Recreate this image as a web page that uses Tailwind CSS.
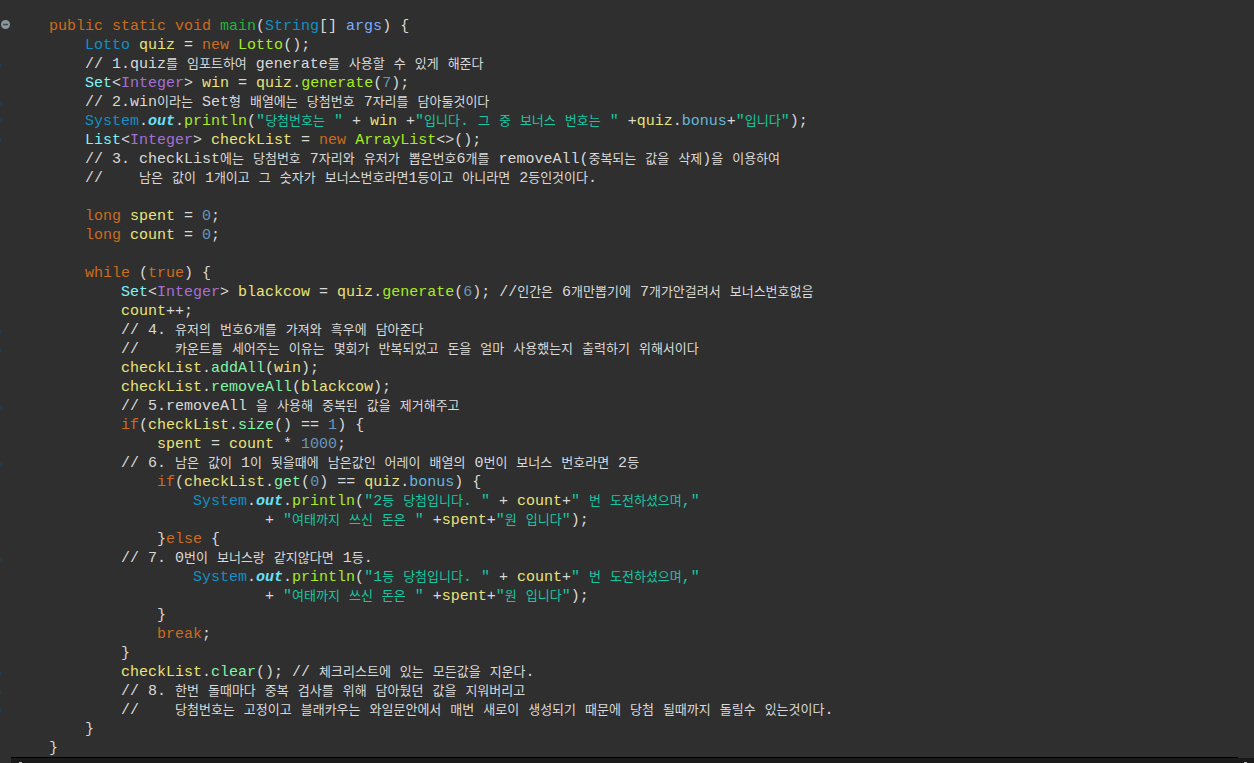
<!DOCTYPE html>
<html lang="ko">
<head>
    <meta charset="UTF-8">
    <title>Lotto.java</title>
    <script src="https://cdn.jsdelivr.net/npm/@tailwindcss/browser@4"></script>
</head>
<body class="bg-[#2f2f2f] h-[763px] overflow-hidden flex flex-col">
    <!-- Editor -->
    <div class="flex h-[757px] overflow-hidden">
        <!-- Gutter: fold icon and ruler marks -->
        <svg width="49" height="757" viewBox="0 0 49 757" class="block shrink-0">
            <circle cx="5.5" cy="24.5" r="4.5" fill="#8a979e"/>
            <rect x="3" y="23.75" width="5" height="1.5" fill="#3f4b52"/>
            <g fill="#1d3d50">
                <rect y="64" width="1.5" height="3"/>
                <rect y="102" width="1.5" height="3"/>
                <rect y="119" width="1.5" height="3"/>
                <rect y="138" width="1.5" height="4"/>
                <rect y="330" width="1.5" height="3"/>
                <rect y="349" width="1.5" height="3"/>
                <rect y="406" width="1.5" height="3"/>
                <rect y="463" width="1.5" height="3"/>
                <rect y="558" width="1.5" height="3"/>
                <rect y="672" width="1.5" height="3"/>
                <rect y="691" width="1.5" height="3"/>
                <rect y="708" width="1.5" height="4"/>
            </g>
        </svg>
        <pre class="pt-[17px] text-[15px] leading-[19px] text-[#d9d9d9] [font-family:'Liberation_Mono','Noto_Sans_CJK_KR',monospace] [&_.ko]:text-[13px]"><span class="text-[#cc6c1d]">public static void</span> <span class="text-[#1eb540]">main</span>(<span class="text-[#1290c3]">String</span>[] <span class="text-[#79abff]">args</span>) {
    <span class="text-[#1290c3]">Lotto</span> <span class="text-[#e9e37a]">quiz</span> = <span class="text-[#cc6c1d]">new</span> <span class="text-[#a7ec21]">Lotto</span>();
    // 1.quiz<span class="ko">를</span> <span class="ko">임포트하여</span> generate<span class="ko">를</span> <span class="ko">사용할</span> <span class="ko">수</span> <span class="ko">있게</span> <span class="ko">해준다</span>
    <span class="text-[#80f2f6]">Set</span>&lt;<span class="text-[#a66fd6]">Integer</span>&gt; <span class="text-[#e9e37a]">win</span> = <span class="text-[#e9e37a]">quiz</span>.<span class="text-[#a7ec21]">generate</span>(<span class="text-[#6897bb]">7</span>);
    // 2.win<span class="ko">이라는</span> Set<span class="ko">형</span> <span class="ko">배열에는</span> <span class="ko">당첨번호</span> 7<span class="ko">자리를</span> <span class="ko">담아둘것이다</span>
    <span class="text-[#1290c3]">System</span>.<span class="text-[#66e1f8] italic font-bold">out</span>.<span class="text-[#a7ec21]">println</span>(<span class="text-[#17c6a3]">"<span class="ko">당첨번호는</span> "</span> + <span class="text-[#e9e37a]">win</span> +<span class="text-[#17c6a3]">"<span class="ko">입니다</span>. <span class="ko">그</span> <span class="ko">중</span> <span class="ko">보너스</span> <span class="ko">번호는</span> "</span> +<span class="text-[#e9e37a]">quiz</span>.<span class="text-[#66b7dc]">bonus</span>+<span class="text-[#17c6a3]">"<span class="ko">입니다</span>"</span>);
    <span class="text-[#80f2f6]">List</span>&lt;<span class="text-[#a66fd6]">Integer</span>&gt; <span class="text-[#e9e37a]">checkList</span> = <span class="text-[#cc6c1d]">new</span> <span class="text-[#a7ec21]">ArrayList</span>&lt;&gt;();
    // 3. checkList<span class="ko">에는</span> <span class="ko">당첨번호</span> 7<span class="ko">자리와</span> <span class="ko">유저가</span> <span class="ko">뽑은번호</span>6<span class="ko">개를</span> removeAll(<span class="ko">중복되는</span> <span class="ko">값을</span> <span class="ko">삭제</span>)<span class="ko">을</span> <span class="ko">이용하여</span>
    //    <span class="ko">남은</span> <span class="ko">값이</span> 1<span class="ko">개이고</span> <span class="ko">그</span> <span class="ko">숫자가</span> <span class="ko">보너스번호라면</span>1<span class="ko">등이고</span> <span class="ko">아니라면</span> 2<span class="ko">등인것이다</span>.

    <span class="text-[#cc6c1d]">long</span> <span class="text-[#e9e37a]">spent</span> = <span class="text-[#6897bb]">0</span>;
    <span class="text-[#cc6c1d]">long</span> <span class="text-[#e9e37a]">count</span> = <span class="text-[#6897bb]">0</span>;

    <span class="text-[#cc6c1d]">while</span> (<span class="text-[#cc6c1d]">true</span>) {
        <span class="text-[#80f2f6]">Set</span>&lt;<span class="text-[#a66fd6]">Integer</span>&gt; <span class="text-[#e9e37a]">blackcow</span> = <span class="text-[#e9e37a]">quiz</span>.<span class="text-[#a7ec21]">generate</span>(<span class="text-[#6897bb]">6</span>); //<span class="ko">인간은</span> 6<span class="ko">개만뽑기에</span> 7<span class="ko">개가안걸려서</span> <span class="ko">보너스번호없음</span>
        <span class="text-[#e9e37a]">count</span>++;
        // 4. <span class="ko">유저의</span> <span class="ko">번호</span>6<span class="ko">개를</span> <span class="ko">가져와</span> <span class="ko">흑우에</span> <span class="ko">담아준다</span>
        //    <span class="ko">카운트를</span> <span class="ko">세어주는</span> <span class="ko">이유는</span> <span class="ko">몇회가</span> <span class="ko">반복되었고</span> <span class="ko">돈을</span> <span class="ko">얼마</span> <span class="ko">사용했는지</span> <span class="ko">출력하기</span> <span class="ko">위해서이다</span>
        <span class="text-[#e9e37a]">checkList</span>.<span class="text-[#80f6a7]">addAll</span>(<span class="text-[#e9e37a]">win</span>);
        <span class="text-[#e9e37a]">checkList</span>.<span class="text-[#80f6a7]">removeAll</span>(<span class="text-[#e9e37a]">blackcow</span>);
        // 5.removeAll <span class="ko">을</span> <span class="ko">사용해</span> <span class="ko">중복된</span> <span class="ko">값을</span> <span class="ko">제거해주고</span>
        <span class="text-[#cc6c1d]">if</span>(<span class="text-[#e9e37a]">checkList</span>.<span class="text-[#80f6a7]">size</span>() == <span class="text-[#6897bb]">1</span>) {
            <span class="text-[#e9e37a]">spent</span> = <span class="text-[#e9e37a]">count</span> * <span class="text-[#6897bb]">1000</span>;
        // 6. <span class="ko">남은</span> <span class="ko">값이</span> 1<span class="ko">이</span> <span class="ko">됫을때에</span> <span class="ko">남은값인</span> <span class="ko">어레이</span> <span class="ko">배열의</span> 0<span class="ko">번이</span> <span class="ko">보너스</span> <span class="ko">번호라면</span> 2<span class="ko">등</span>
            <span class="text-[#cc6c1d]">if</span>(<span class="text-[#e9e37a]">checkList</span>.<span class="text-[#80f6a7]">get</span>(<span class="text-[#6897bb]">0</span>) == <span class="text-[#e9e37a]">quiz</span>.<span class="text-[#66b7dc]">bonus</span>) {
                <span class="text-[#1290c3]">System</span>.<span class="text-[#66e1f8] italic font-bold">out</span>.<span class="text-[#a7ec21]">println</span>(<span class="text-[#17c6a3]">"2<span class="ko">등</span> <span class="ko">당첨입니다</span>. "</span> + <span class="text-[#e9e37a]">count</span>+<span class="text-[#17c6a3]">" <span class="ko">번</span> <span class="ko">도전하셨으며</span>,"</span>
                        + <span class="text-[#17c6a3]">"<span class="ko">여태까지</span> <span class="ko">쓰신</span> <span class="ko">돈은</span> "</span> +<span class="text-[#e9e37a]">spent</span>+<span class="text-[#17c6a3]">"<span class="ko">원</span> <span class="ko">입니다</span>"</span>);
            }<span class="text-[#cc6c1d]">else</span> {
        // 7. 0<span class="ko">번이</span> <span class="ko">보너스랑</span> <span class="ko">같지않다면</span> 1<span class="ko">등</span>.
                <span class="text-[#1290c3]">System</span>.<span class="text-[#66e1f8] italic font-bold">out</span>.<span class="text-[#a7ec21]">println</span>(<span class="text-[#17c6a3]">"1<span class="ko">등</span> <span class="ko">당첨입니다</span>. "</span> + <span class="text-[#e9e37a]">count</span>+<span class="text-[#17c6a3]">" <span class="ko">번</span> <span class="ko">도전하셨으며</span>,"</span>
                        + <span class="text-[#17c6a3]">"<span class="ko">여태까지</span> <span class="ko">쓰신</span> <span class="ko">돈은</span> "</span> +<span class="text-[#e9e37a]">spent</span>+<span class="text-[#17c6a3]">"<span class="ko">원</span> <span class="ko">입니다</span>"</span>);
            }
            <span class="text-[#cc6c1d]">break</span>;
        }
        <span class="text-[#e9e37a]">checkList</span>.<span class="text-[#80f6a7]">clear</span>(); // <span class="ko">체크리스트에</span> <span class="ko">있는</span> <span class="ko">모든값을</span> <span class="ko">지운다</span>.
        // 8. <span class="ko">한번</span> <span class="ko">돌때마다</span> <span class="ko">중복</span> <span class="ko">검사를</span> <span class="ko">위해</span> <span class="ko">담아뒀던</span> <span class="ko">값을</span> <span class="ko">지워버리고</span>
        //    <span class="ko">당첨번호는</span> <span class="ko">고정이고</span> <span class="ko">블래카우는</span> <span class="ko">와일문안에서</span> <span class="ko">매번</span> <span class="ko">새로이</span> <span class="ko">생성되기</span> <span class="ko">때문에</span> <span class="ko">당첨</span> <span class="ko">될때까지</span> <span class="ko">돌릴수</span> <span class="ko">있는것이다</span>.
    }
}</pre>
    </div>
    <!-- Bottom view edge -->
    <div class="h-[6px] ml-[11px] flex bg-[#1a1a1a]">
        <div class="flex-1 border-t border-black flex items-end pl-[8px]">
            <div class="w-[3px] h-px bg-[#bbbbbb]"></div>
        </div>
        <div class="w-[16px] border-t border-[#303030] flex items-end pl-[6px]">
            <div class="w-[3px] h-px bg-[#bbbbbb]"></div>
        </div>
    </div>
</body>
</html>
